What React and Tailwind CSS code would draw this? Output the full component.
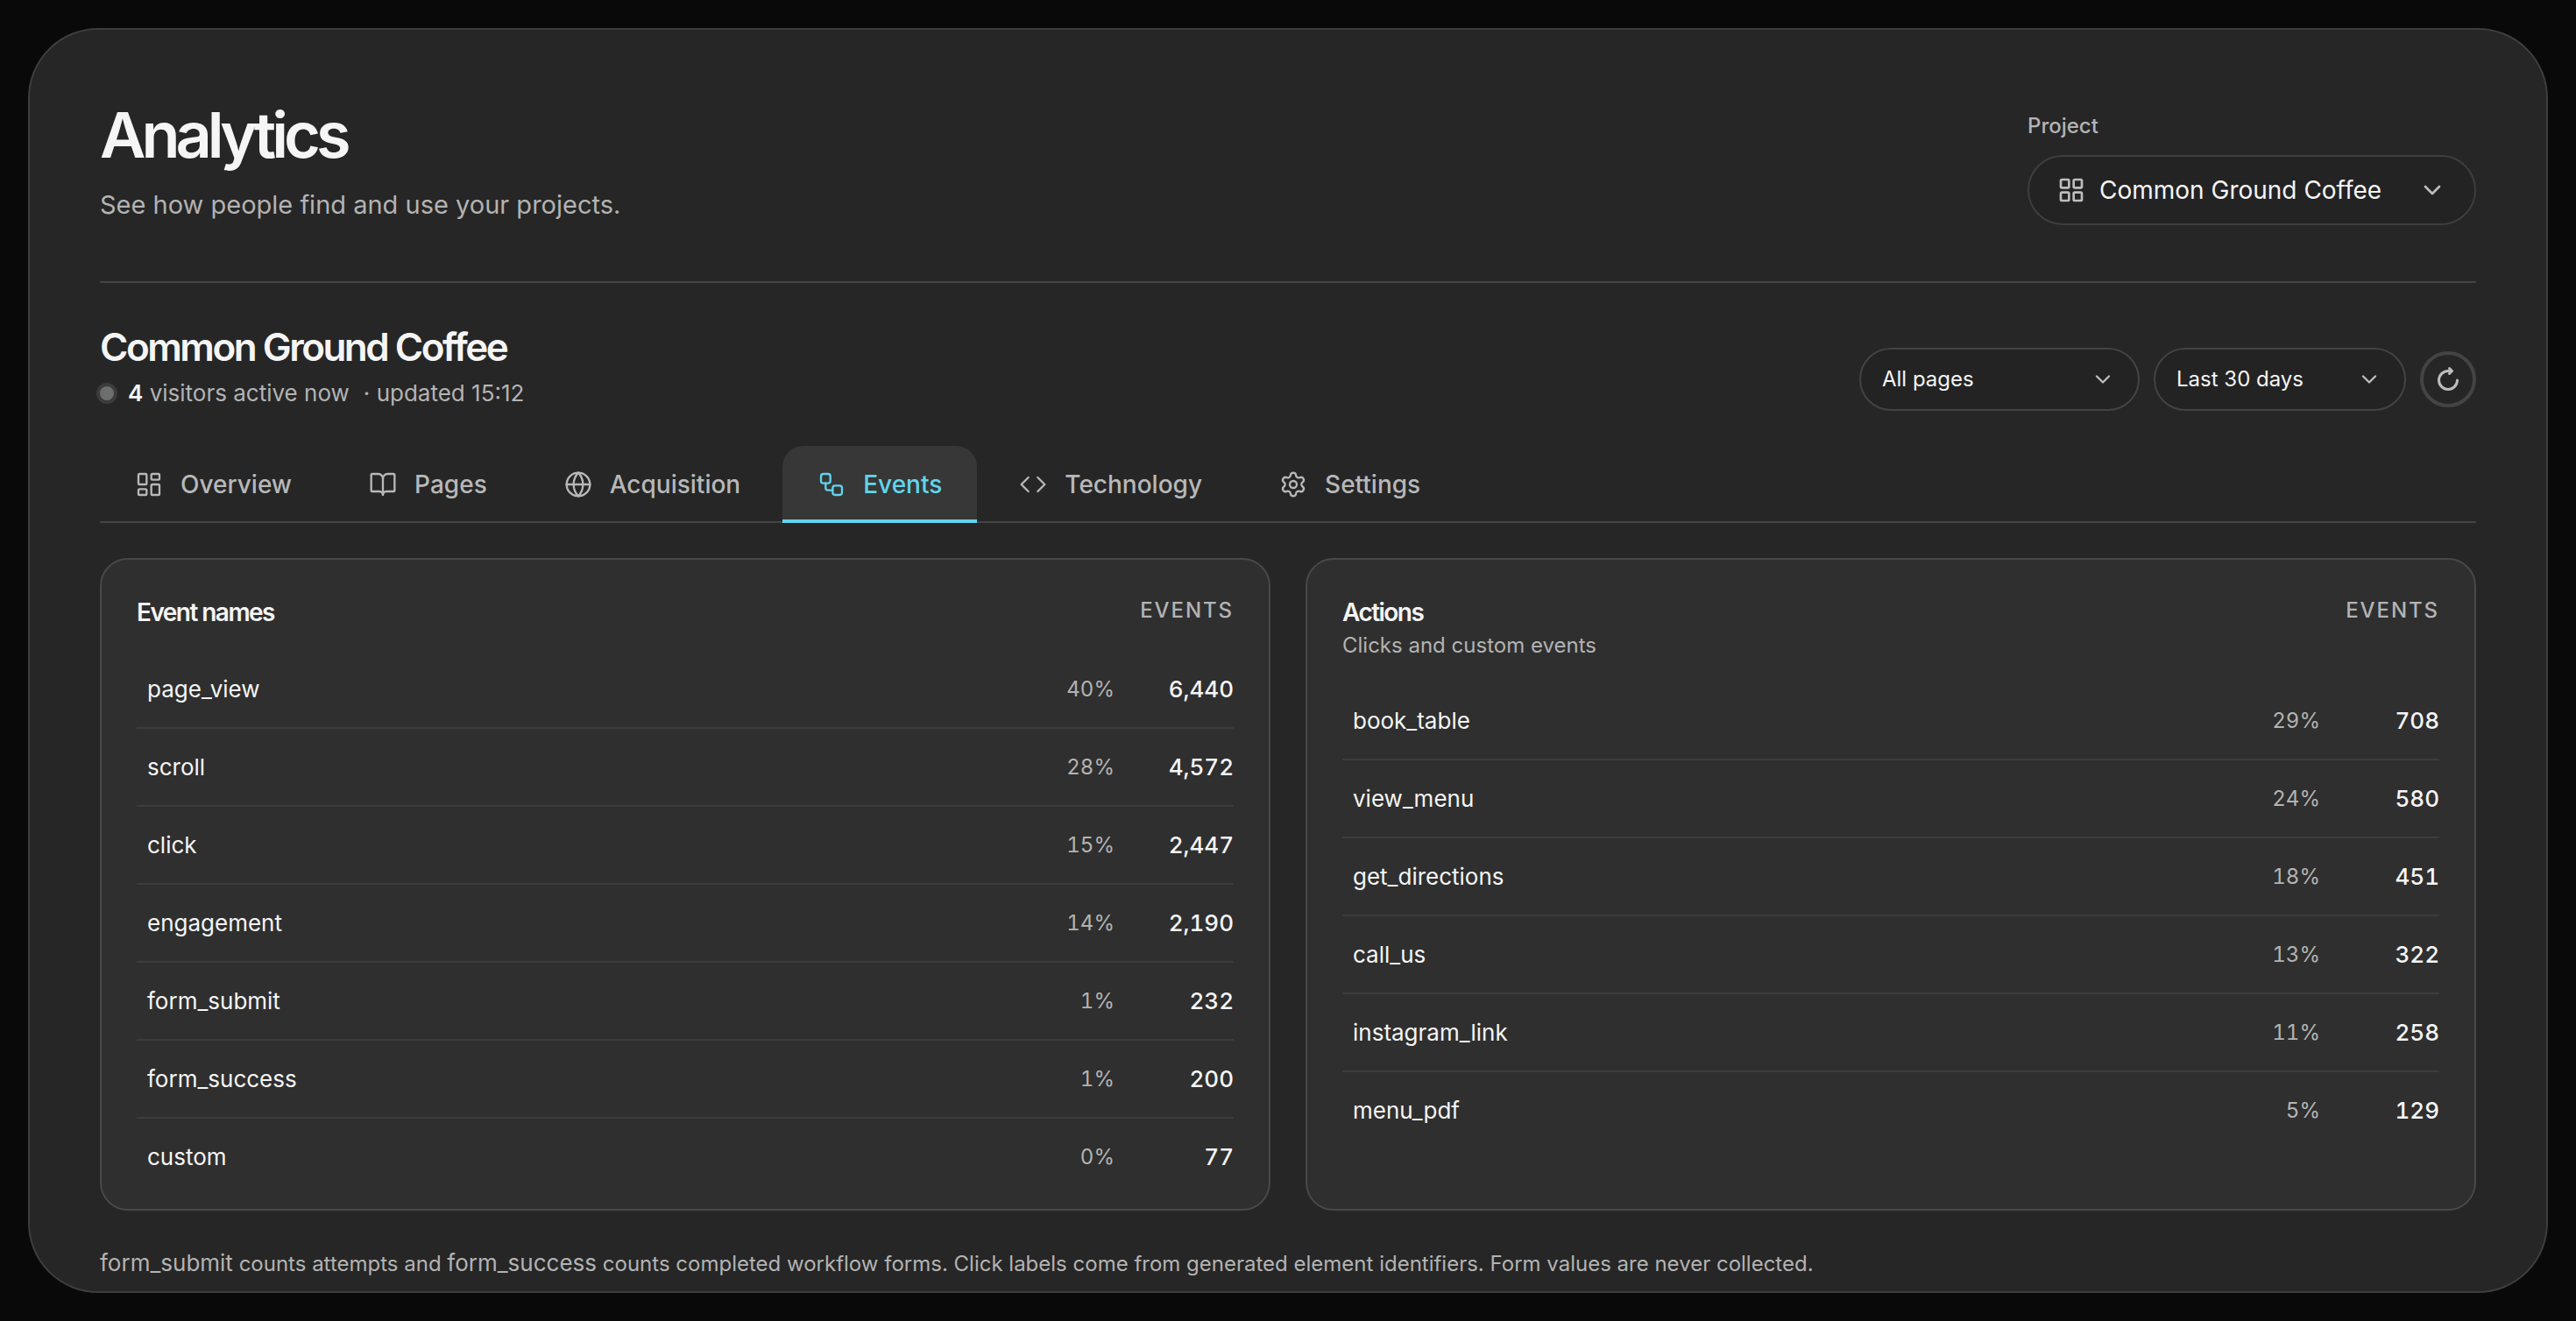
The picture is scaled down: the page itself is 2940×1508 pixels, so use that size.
import { useState } from "react";
import {
  BookOpen,
  ChevronDown,
  Code,
  Globe,
  LayoutDashboard,
  LayoutGrid,
  Settings,
  Workflow,
} from "lucide-react";

const tabs = [
  { name: "Overview", icon: LayoutDashboard },
  { name: "Pages", icon: BookOpen },
  { name: "Acquisition", icon: Globe },
  { name: "Events", icon: Workflow },
  { name: "Technology", icon: Code },
  { name: "Settings", icon: Settings },
];

const eventNames = [
  ["page_view", "40%", "6,440"],
  ["scroll", "28%", "4,572"],
  ["click", "15%", "2,447"],
  ["engagement", "14%", "2,190"],
  ["form_submit", "1%", "232"],
  ["form_success", "1%", "200"],
  ["custom", "0%", "77"],
];

const actions = [
  ["book_table", "29%", "708"],
  ["view_menu", "24%", "580"],
  ["get_directions", "18%", "451"],
  ["call_us", "13%", "322"],
  ["instagram_link", "11%", "258"],
  ["menu_pdf", "5%", "129"],
];

function RefreshIcon() {
  return (
    <svg
      viewBox="0 0 32 32"
      fill="none"
      stroke="currentColor"
      strokeWidth="3"
      strokeLinecap="round"
      strokeLinejoin="round"
      className="size-8"
    >
      <path d="M26.5 17A10.5 10.5 0 1 1 16 6.5h4" />
      <path d="m17.5 3.5 3 3-3 3" />
    </svg>
  );
}

function FilterSelect({ label, options, width }) {
  return (
    <div className={`relative ${width}`}>
      <select
        aria-label={label}
        className="h-[72px] w-full appearance-none rounded-[36px] border-2 border-[#434343] bg-[#232323] pl-6 pr-16 text-2xl text-[#f5f5f5]"
      >
        {options.map((option) => (
          <option key={option}>{option}</option>
        ))}
      </select>
      <ChevronDown
        size={28}
        className="pointer-events-none absolute right-7 top-[22px] text-[#bdbdbd]"
      />
    </div>
  );
}

function EventCard({ title, subtitle, rows }) {
  return (
    <section className="rounded-[32px] border-2 border-[#484848] bg-[#2f2f2f] px-10 pb-4 pt-10">
      <div className="flex items-start justify-between pb-6">
        <div>
          <h3 className="text-[28px] font-semibold leading-10 tracking-[-0.055em] text-[#f5f5f5]">
            {title}
          </h3>
          {subtitle && (
            <p className="text-2xl leading-9 text-[#b3b3b3]">{subtitle}</p>
          )}
        </div>
        <span className="text-2xl font-medium leading-9 tracking-[0.08em] text-[#b3b3b3]">
          EVENTS
        </span>
      </div>
      <table className="w-full border-separate border-spacing-0 tabular-nums">
        <tbody>
          {rows.map(([name, share, count]) => (
            <tr
              key={name}
              className="*:h-[89px] *:border-b-2 *:border-[#3c3c3c] last:*:h-[87px] last:*:border-b-0"
            >
              <th
                scope="row"
                className="pl-3 text-left text-[26px] font-normal text-[#f5f5f5]"
              >
                {name}
              </th>
              <td className="text-right text-2xl text-[#b3b3b3]">{share}</td>
              <td className="w-[136px] text-right text-[26px] font-medium text-[#f5f5f5]">
                {count}
              </td>
            </tr>
          ))}
        </tbody>
      </table>
    </section>
  );
}

export default function App() {
  const [selected, setSelected] = useState("Events");

  return (
    <div className="flex min-h-screen flex-col bg-[#090909] p-8 font-['Inter',sans-serif]">
      <main className="flex-1 rounded-[80px] border-2 border-[#3e3e3e] bg-[#262626] px-20">
        <header className="flex items-start justify-between border-b-2 border-[#444444] pb-16 pt-20">
          <div>
            <h1 className="text-[72px] font-semibold leading-20 tracking-[-5px] text-[#f5f5f5]">
              Analytics
            </h1>
            <p className="mt-5 text-[29px] leading-10 text-[#b3b3b3]">
              See how people find and use your projects.
            </p>
          </div>
          <div className="mt-3 w-[512px]">
            <label
              htmlFor="project"
              className="block text-2xl font-medium leading-9 text-[#b3b3b3]"
            >
              Project
            </label>
            <div className="relative mt-[15px]">
              <LayoutGrid
                size={32}
                className="pointer-events-none absolute left-[34px] top-6 text-[#bdbdbd]"
              />
              <select
                id="project"
                className="block h-20 w-full appearance-none rounded-[40px] border-2 border-[#3e3e3e] bg-[#232323] pl-20 pr-16 text-[28px] text-[#f5f5f5]"
              >
                <option>Common Ground Coffee</option>
              </select>
              <ChevronDown
                size={32}
                className="pointer-events-none absolute right-[34px] top-6 text-[#bdbdbd]"
              />
            </div>
          </div>
        </header>

        <div className="flex items-end justify-between pt-11">
          <div>
            <h2 className="text-[44px] font-semibold leading-[58px] tracking-[-0.057em] text-[#f5f5f5]">
              Common Ground Coffee
            </h2>
            <p className="mt-1 flex items-center text-[26px] leading-10 text-[#b3b3b3]">
              <span className="mr-4 size-4 rounded-full bg-[#6b6f6e] ring-4 ring-[#3c3c3c]" />
              <span>
                <strong className="font-semibold text-[#f5f5f5]">4</strong>{" "}
                visitors active now
              </span>
              <span className="ml-4">· updated 15:12</span>
            </p>
          </div>
          <div className="flex items-center gap-4">
            <FilterSelect
              label="Page"
              options={["All pages"]}
              width="w-[320px]"
            />
            <FilterSelect
              label="Date range"
              options={["Last 30 days"]}
              width="w-[288px]"
            />
            <button
              aria-label="Refresh"
              className="flex size-16 items-center justify-center rounded-full border-4 border-[#444444] text-[#bdbdbd]"
            >
              <RefreshIcon />
            </button>
          </div>
        </div>

        <nav className="mt-10 flex gap-2 border-b-2 border-[#444444]">
          {tabs.map(({ name, icon: Icon }) => (
            <button
              key={name}
              onClick={() => setSelected(name)}
              className={`-mb-0.5 flex h-[88px] items-center gap-5 rounded-t-3xl border-b-4 px-10 pt-1 text-[28px] font-medium ${
                selected === name
                  ? "border-[#62d4ec] bg-[#373737] text-[#62d4ec]"
                  : "border-transparent text-[#b8b8b8]"
              }`}
            >
              <Icon size={32} strokeWidth={1.75} />
              {name}
            </button>
          ))}
        </nav>

        <div className="mt-10 grid grid-cols-2 gap-10">
          <EventCard title="Event names" rows={eventNames} />
          <EventCard
            title="Actions"
            subtitle="Clicks and custom events"
            rows={actions}
          />
        </div>

        <p className="mt-10 text-2xl leading-10 text-[#b3b3b3]">
          <span className="text-[26px]">form_submit</span> counts attempts and{" "}
          <span className="text-[26px]">form_success</span> counts completed
          workflow forms. Click labels come from generated element identifiers.
          Form values are never collected.
        </p>
      </main>
    </div>
  );
}
